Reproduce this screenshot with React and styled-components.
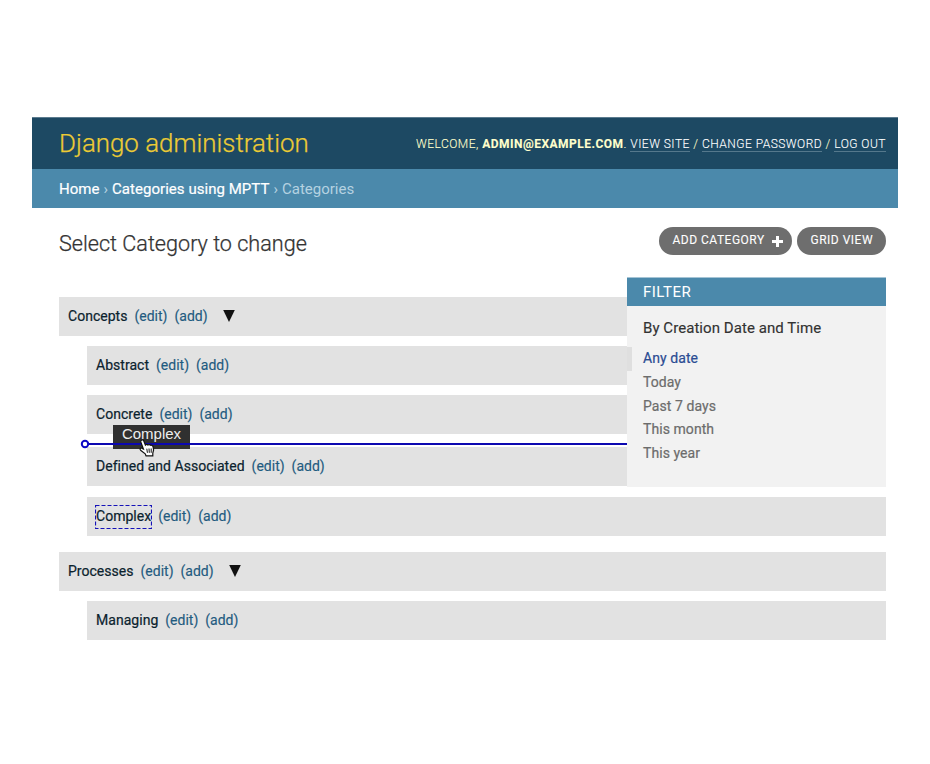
import React from "react";
import styled, { createGlobalStyle } from "styled-components";

const GlobalStyle = createGlobalStyle`
  * { box-sizing: border-box; }
  body { margin: 0; background: #fff; font-family: Roboto, "Liberation Sans", sans-serif; }
`;

const Page = styled.div`
  height: 764px;
  padding: 117px 32px 0;
  overflow: hidden;
`;

const Header = styled.header`
  display: flex;
  align-items: center;
  justify-content: space-between;
  height: 52px;
  padding: 0 12px 0 27px;
  background: #1d4963;
  border-top: 1px solid #5b7b8e;
`;

const SiteName = styled.h1`
  margin: 0 0 2px;
  font-size: 25.9px;
  line-height: 32px;
  font-weight: 300;
  -webkit-text-stroke: 0.25px;
  color: #eccb35;
`;

const UserTools = styled.div`
  font-size: 12px;
  line-height: 16px;
  font-weight: 300;
  letter-spacing: 0.48px;
  text-transform: uppercase;
  white-space: nowrap;
  color: #ffc;
  -webkit-text-stroke: 0.1px;
`;

const UserName = styled.strong`
  font-weight: 700;
`;

const ToolLink = styled.a`
  color: #fff;
  border-bottom: 1px solid #55788c;
`;

const Breadcrumbs = styled.nav`
  display: flex;
  align-items: center;
  gap: 4px;
  height: 39px;
  padding-left: 27px;
  background: #4b89ab;
  color: #b5d2e1;
  font-size: 15px;
`;

const Crumb = styled.a`
  color: #fff;
  letter-spacing: 0.04px;
  -webkit-text-stroke: 0.2px;
`;

const Content = styled.main`
  position: relative;
  padding: 18px 12px 0 27px;
`;

const TitleBar = styled.div`
  display: flex;
  justify-content: space-between;
  height: 71px;
`;

const Title = styled.h2`
  margin: 4px 0 0;
  font-size: 21.6px;
  line-height: 28px;
  font-weight: 300;
  -webkit-text-stroke: 0.25px;
  color: #333;
`;

const Actions = styled.div`
  display: flex;
  gap: 5px;
  align-items: flex-start;
  margin-top: 1px;
`;

const PillButton = styled.a`
  display: flex;
  align-items: center;
  justify-content: space-between;
  width: ${(p) => p.$width}px;
  height: 28px;
  padding: 0 9px 2px 13.5px;
  border-radius: 14px;
  background: #6e6e6e;
  color: #fff;
  font-size: 12px;
  letter-spacing: 0.5px;
  text-transform: uppercase;
  white-space: nowrap;
  -webkit-text-stroke: 0.1px;
`;

const PlusIcon = styled.svg`
  width: 11px;
  height: 11px;
  margin-top: 2px;
`;

const Row = styled.div`
  display: flex;
  align-items: center;
  gap: 7px;
  height: 39px;
  margin-left: ${(p) => (p.$child ? 28 : 0)}px;
  margin-bottom: ${(p) => p.$gap}px;
  padding: 0 0 1px 9px;
  background: #e2e2e2;
  font-size: 14px;
  white-space: nowrap;
`;

const RowName = styled.span`
  position: relative;
  color: #0b222e;
  letter-spacing: 0.03px;
  -webkit-text-stroke: 0.2px;
`;

const RowAction = styled.a`
  color: #1f5b80;
  -webkit-text-stroke: 0.15px;
`;

const Triangle = styled.svg`
  width: 12px;
  height: 13px;
  margin-left: 8px;
`;

const DashedFrame = styled.svg`
  position: absolute;
  left: -1px;
  top: -3px;
  width: 57px;
  height: 24px;
`;

const Filter = styled.aside`
  position: absolute;
  left: 595px;
  top: 69px;
  width: 259px;
  height: 210px;
  background: #f2f2f2;
`;

const FilterHeading = styled.h3`
  display: flex;
  align-items: center;
  height: 29px;
  margin: 0 0 10px;
  padding-left: 16px;
  border-top: 1px solid #a5c4d5;
  background: #4b89ab;
  color: #fff;
  font-size: 15px;
  font-weight: 400;
  letter-spacing: 0.5px;
`;

const FilterTitle = styled.h4`
  margin: 0 0 6px 16px;
  font-size: 15px;
  line-height: 24px;
  font-weight: 400;
  letter-spacing: 0.06px;
  -webkit-text-stroke: 0.15px;
  color: #333;
`;

const FilterList = styled.ul`
  margin: 0;
  padding: 0 0 0 16px;
  list-style: none;
`;

const FilterItem = styled.li`
  height: 23.8px;
  line-height: 24px;
  font-size: 14px;
  letter-spacing: 0.07px;
  -webkit-text-stroke: 0.2px;
  color: ${(p) => (p.$selected ? "#2b4c93" : "#6c6c6c")};
`;

const FilterMarker = styled.span`
  position: absolute;
  left: 0;
  top: 70px;
  width: 5px;
  height: 24px;
  background: #dfdfdf;
`;

const DropLine = styled.svg`
  position: absolute;
  left: 48px;
  top: 231px;
  width: 547px;
  height: 10px;
`;

const DragGhost = styled.div`
  position: absolute;
  left: 81px;
  top: 217px;
  width: 77px;
  height: 24px;
  background: #303030;
  color: #eee;
  font-family: "Liberation Sans", sans-serif;
  font-size: 15px;
  line-height: 18px;
  text-align: center;
`;

const Cursor = styled.svg`
  position: absolute;
  left: 106px;
  top: 230px;
  width: 18px;
  height: 19px;
`;

const rows = [
  { name: "Concepts", gap: 10, open: true },
  { name: "Abstract", child: true, gap: 10 },
  { name: "Concrete", child: true, gap: 13 },
  { name: "Defined and Associated", child: true, gap: 11 },
  { name: "Complex", child: true, gap: 16, dragged: true },
  { name: "Processes", gap: 10, open: true },
  { name: "Managing", child: true, gap: 0 },
];

const dates = ["Any date", "Today", "Past 7 days", "This month", "This year"];

function CategoryRow({ name, child, gap, open, dragged }) {
  return (
    <Row $child={child} $gap={gap}>
      <RowName>
        {name}
        {dragged && (
          <DashedFrame viewBox="0 0 57 24">
            <rect x="0.5" y="0.5" width="56" height="23" fill="none" stroke="#1512b8" strokeWidth="1.2" strokeDasharray="4 2" />
          </DashedFrame>
        )}
      </RowName>
      <RowAction>(edit)</RowAction>
      <RowAction>(add)</RowAction>
      {open && (
        <Triangle viewBox="0 0 12 13">
          <path d="M0.2 0H11.8L6 12Z" fill="#111" />
        </Triangle>
      )}
    </Row>
  );
}

export default function App() {
  return (
    <Page>
      <GlobalStyle />
      <Header>
        <SiteName>Django administration</SiteName>
        <UserTools>
          Welcome, <UserName>admin@example.com</UserName>. <ToolLink>View site</ToolLink> /{" "}
          <ToolLink>Change password</ToolLink> / <ToolLink>Log out</ToolLink>
        </UserTools>
      </Header>
      <Breadcrumbs>
        <Crumb>Home</Crumb>
        <span>›</span>
        <Crumb>Categories using MPTT</Crumb>
        <span>›</span>
        <span>Categories</span>
      </Breadcrumbs>
      <Content>
        <TitleBar>
          <Title>Select Category to change</Title>
          <Actions>
            <PillButton $width={133}>
              Add category
              <PlusIcon viewBox="0 0 11 11">
                <path d="M5.5 0V11M0 5.5H11" stroke="#fff" strokeWidth="3" />
              </PlusIcon>
            </PillButton>
            <PillButton $width={89}>Grid view</PillButton>
          </Actions>
        </TitleBar>
        {rows.map((row) => (
          <CategoryRow key={row.name} {...row} />
        ))}
        <DragGhost>Complex</DragGhost>
        <DropLine viewBox="0 0 547 10">
          <path d="M9 5H547" stroke="#0c08b0" strokeWidth="2.2" />
          <circle cx="5" cy="5" r="3.2" fill="#fff" stroke="#0c08c4" strokeWidth="2" />
        </DropLine>
        <Cursor viewBox="0 0 18 19">
          <path
            d="M3.4 2.2C4.4 1.5 5.4 2 5.8 3L7.4 7C8 6.3 9.2 6.2 9.9 7C10.7 6.3 11.9 6.5 12.4 7.3C13.6 6.8 14.9 7.6 15.1 8.8L15.6 12L14.8 15V17.8H8L7.2 15.8L2.6 12.2C1.5 11.1 2.4 9.7 3.7 10.1L5.4 11L2.8 4C2.5 3.3 2.7 2.6 3.4 2.2Z"
            fill="#fff"
            stroke="#111"
            strokeWidth="1.2"
          />
          <path d="M8.8 10.7L9.4 14.8M11 10.5L11.3 14.8M13.2 10.5V14.8" stroke="#111" strokeWidth="1" />
        </Cursor>
        <Filter>
          <FilterHeading>FILTER</FilterHeading>
          <FilterTitle>By Creation Date and Time</FilterTitle>
          <FilterMarker />
          <FilterList>
            {dates.map((date, i) => (
              <FilterItem key={date} $selected={i === 0}>
                {date}
              </FilterItem>
            ))}
          </FilterList>
        </Filter>
      </Content>
    </Page>
  );
}
